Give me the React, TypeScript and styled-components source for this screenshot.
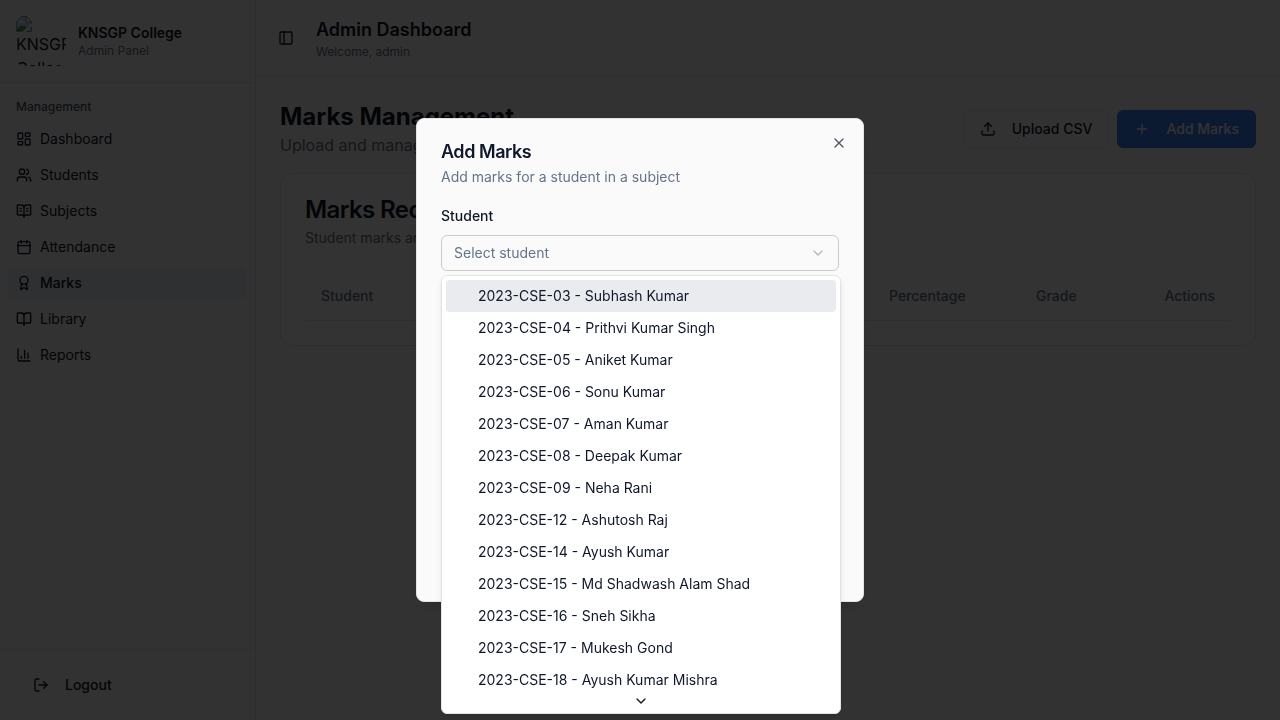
import React, { useState } from "react";
import styled, { createGlobalStyle } from "styled-components";
import {
  Award,
  BookOpen,
  BookOpenText,
  Calendar,
  ChartColumn,
  ChevronDown,
  LayoutDashboard,
  LogOut,
  PanelLeft,
  Plus,
  Upload,
  Users,
  X,
} from "lucide-react";

const color = {
  page: "#fafafa",
  card: "#fdfdfd",
  text: "#0f172a",
  muted: "#64748b",
  line: "#e4e4e4",
  input: "#cccccc",
  accent: "#eaebef",
  active: "#e9eff5",
  primary: "#3b82f6",
};

const GlobalStyle = createGlobalStyle`
  *, *::before, *::after { box-sizing: border-box; }
  body {
    margin: 0;
    background: ${color.page};
    color: ${color.text};
    font-family: Inter, "Liberation Sans", sans-serif;
    font-size: 16px;
    line-height: 24px;
  }
  h1, h2, h3, p, ul { margin: 0; padding: 0; }
  ul { list-style: none; }
  button, input, select { font: inherit; color: inherit; }
  svg { flex-shrink: 0; }
`;

const Shell = styled.div`
  display: flex;
  min-height: 100vh;
`;

const Sidebar = styled.aside`
  display: flex;
  flex-direction: column;
  width: 256px;
  flex-shrink: 0;
  border-right: 1px solid ${color.line};
`;

const Brand = styled.div`
  display: flex;
  align-items: center;
  gap: 12px;
  padding: 16px;
  border-bottom: 1px solid ${color.line};
`;

const Logo = styled.div`
  width: 50px;
  height: 50px;
  overflow: hidden;
  border-radius: 8px;
  svg { display: block; }
`;

const BrandName = styled.h2`
  font-size: 14px;
  line-height: 20px;
  font-weight: 600;
`;

const Small = styled.p`
  font-size: 12px;
  line-height: 16px;
  color: ${color.muted};
`;

const Nav = styled.nav`
  flex: 1;
  padding: 8px;
`;

const NavLabel = styled.div`
  padding: 0 8px;
  font-size: 12px;
  line-height: 32px;
  font-weight: 500;
  color: #475569;
`;

const NavList = styled.ul`
  display: flex;
  flex-direction: column;
  gap: 4px;
`;

const NavLink = styled.a<{ $active?: boolean }>`
  display: flex;
  align-items: center;
  gap: 8px;
  height: 32px;
  padding: 0 8px;
  border-radius: 6px;
  font-size: 14px;
  font-weight: ${(p) => (p.$active ? 500 : 400)};
  background: ${(p) => (p.$active ? color.active : "transparent")};
  color: inherit;
  text-decoration: none;
`;

const SidebarFooter = styled.div`
  padding: 16px;
  border-top: 1px solid ${color.line};
`;

const Button = styled.button<{ $variant: "ghost" | "outline" | "primary" }>`
  display: flex;
  align-items: center;
  gap: 16px;
  height: 38px;
  padding: 0 16px;
  border: 1px solid
    ${(p) => (p.$variant === "outline" ? color.line : p.$variant === "primary" ? color.primary : "transparent")};
  border-radius: 6px;
  background: ${(p) => (p.$variant === "primary" ? color.primary : "transparent")};
  color: ${(p) => (p.$variant === "primary" ? color.page : color.text)};
  font-size: 14px;
  line-height: 20px;
  font-weight: 500;
  white-space: nowrap;
  cursor: pointer;
`;

const IconButton = styled.button`
  display: flex;
  align-items: center;
  justify-content: center;
  width: 28px;
  height: 28px;
  padding: 0;
  border: 0;
  background: transparent;
  cursor: pointer;
`;

const Content = styled.div`
  flex: 1;
  min-width: 0;
`;

const TopBar = styled.header`
  display: flex;
  align-items: center;
  gap: 16px;
  padding: 16px;
  border-bottom: 1px solid ${color.line};
`;

const TopTitle = styled.h1`
  font-size: 18px;
  line-height: 28px;
  font-weight: 600;
`;

const Main = styled.main`
  display: flex;
  flex-direction: column;
  gap: 16px;
  padding: 24px;
`;

const PageHead = styled.div`
  display: flex;
  align-items: center;
  justify-content: space-between;
`;

const PageTitle = styled.h2`
  font-size: 24px;
  line-height: 32px;
  font-weight: 700;
`;

const PageText = styled.p`
  color: ${color.muted};
`;

const Actions = styled.div`
  display: flex;
  gap: 8px;
`;

const Card = styled.section`
  padding: 24px;
  border: 1px solid ${color.line};
  border-radius: 12px;
  background: ${color.card};
`;

const CardTitle = styled.h3`
  font-size: 24px;
  line-height: 24px;
  font-weight: 600;
  letter-spacing: -0.025em;
`;

const Description = styled.p`
  margin-top: 6px;
  font-size: 14px;
  line-height: 20px;
  color: ${color.muted};
`;

const Table = styled.table`
  width: 100%;
  margin-top: 24px;
  table-layout: fixed;
  border-collapse: separate;
  border-spacing: 0;
  font-size: 14px;
  line-height: 20px;
`;

const HeadCell = styled.th<{ $width?: number; $end?: boolean }>`
  width: ${(p) => (p.$width ? `${p.$width}px` : "auto")};
  height: 49px;
  padding: 0 16px;
  border-bottom: 1px solid ${color.line};
  text-align: ${(p) => (p.$end ? "right" : "left")};
  font-weight: 500;
  color: ${color.muted};
`;

const Overlay = styled.div`
  position: fixed;
  inset: 0;
  display: flex;
  align-items: center;
  justify-content: center;
  background: rgba(0, 0, 0, 0.8);
`;

const Dialog = styled.div`
  position: relative;
  width: 100%;
  max-width: 448px;
  padding: 24px;
  border: 1px solid ${color.line};
  border-radius: 8px;
  background: ${color.page};
  box-shadow: 0 10px 15px -3px rgba(0, 0, 0, 0.1), 0 4px 6px -4px rgba(0, 0, 0, 0.1);
`;

const DialogTitle = styled.h2`
  font-size: 18px;
  line-height: 18px;
  font-weight: 600;
  letter-spacing: -0.025em;
`;

const CloseButton = styled.button`
  position: absolute;
  top: 16px;
  right: 16px;
  display: flex;
  padding: 0;
  border: 0;
  background: transparent;
  opacity: 0.7;
  cursor: pointer;
`;

const Form = styled.form`
  display: flex;
  flex-direction: column;
  gap: 16px;
  margin-top: 16px;
`;

const Field = styled.div`
  position: relative;
  display: flex;
  flex-direction: column;
  gap: 6px;
`;

const Label = styled.label`
  font-size: 14px;
  line-height: 26px;
  font-weight: 500;
`;

const SelectBox = styled.div`
  display: grid;
  align-items: center;
  > * { grid-area: 1 / 1; }
  > svg {
    justify-self: end;
    margin-right: 13px;
    color: ${color.muted};
    opacity: 0.5;
    pointer-events: none;
  }
`;

const Select = styled.select`
  width: 100%;
  height: 36px;
  padding: 0 36px 0 12px;
  border: 1px solid ${color.input};
  border-radius: 6px;
  appearance: none;
  background: transparent;
  font-size: 14px;
  line-height: 20px;
  color: ${color.muted};
`;

const Input = styled.input`
  width: 100%;
  height: 36px;
  padding: 0 12px;
  border: 1px solid ${color.input};
  border-radius: 6px;
  background: transparent;
  font-size: 14px;
`;

const Menu = styled.div`
  position: absolute;
  top: calc(100% + 4px);
  left: 0;
  right: -2px;
  z-index: 1;
  display: flex;
  flex-direction: column;
  max-height: 439px;
  border: 1px solid ${color.line};
  border-radius: 6px;
  background: #ffffff;
  box-shadow: 0 4px 6px -1px rgba(0, 0, 0, 0.1), 0 2px 4px -2px rgba(0, 0, 0, 0.1);
`;

const Options = styled.ul`
  flex: 1;
  min-height: 0;
  padding: 4px;
  overflow: hidden;
`;

const Option = styled.li<{ $active: boolean }>`
  padding: 6px 8px 6px 32px;
  border-radius: 4px;
  background: ${(p) => (p.$active ? color.accent : "transparent")};
  font-size: 14px;
  line-height: 20px;
  cursor: default;
`;

const ScrollHint = styled.div`
  display: flex;
  justify-content: center;
  padding: 4px 0;
`;

const navItems = [
  { label: "Dashboard", Icon: LayoutDashboard },
  { label: "Students", Icon: Users },
  { label: "Subjects", Icon: BookOpenText },
  { label: "Attendance", Icon: Calendar },
  { label: "Marks", Icon: Award },
  { label: "Library", Icon: BookOpen },
  { label: "Reports", Icon: ChartColumn },
];

const students = [
  "2023-CSE-03 - Subhash Kumar",
  "2023-CSE-04 - Prithvi Kumar Singh",
  "2023-CSE-05 - Aniket Kumar",
  "2023-CSE-06 - Sonu Kumar",
  "2023-CSE-07 - Aman Kumar",
  "2023-CSE-08 - Deepak Kumar",
  "2023-CSE-09 - Neha Rani",
  "2023-CSE-12 - Ashutosh Raj",
  "2023-CSE-14 - Ayush Kumar",
  "2023-CSE-15 - Md Shadwash Alam Shad",
  "2023-CSE-16 - Sneh Sikha",
  "2023-CSE-17 - Mukesh Gond",
  "2023-CSE-18 - Ayush Kumar Mishra",
];

// Placeholder glyph for a logo that has not loaded.
function MissingImage() {
  return (
    <svg width="16" height="16" viewBox="0 0 16 16" aria-hidden="true">
      <path d="M1 1h9l5 5v9H1z" fill="#c3d4f3" />
      <path d="M3 6a2 2 0 0 1 3-1 2 2 0 0 1 3 2H3z" fill="#ffffff" />
      <path d="M1 15v-2c2-3 5-4 8-3l3 3-2 2z" fill="#4fa52f" />
      <path d="M10 1v5h5" fill="#ffffff" stroke="#909090" />
      <path d="M15.500 15.500V5.500L10.500.5H.5v15z" fill="none" stroke="#909090" />
      <path d="M6 16 16 7v3l-6 6z" fill="#fafafa" />
    </svg>
  );
}

export default function App() {
  const [highlighted, setHighlighted] = useState(0);

  return (
    <>
      <GlobalStyle />
      <Shell>
        <Sidebar>
          <Brand>
            <Logo>
              <MissingImage />
              KNSGP College
            </Logo>
            <div>
              <BrandName>KNSGP College</BrandName>
              <Small>Admin Panel</Small>
            </div>
          </Brand>
          <Nav>
            <NavLabel>Management</NavLabel>
            <NavList>
              {navItems.map(({ label, Icon }) => (
                <li key={label}>
                  <NavLink href="#" $active={label === "Marks"}>
                    <Icon size={16} />
                    {label}
                  </NavLink>
                </li>
              ))}
            </NavList>
          </Nav>
          <SidebarFooter>
            <Button $variant="ghost" type="button">
              <LogOut size={16} />
              Logout
            </Button>
          </SidebarFooter>
        </Sidebar>

        <Content>
          <TopBar>
            <IconButton type="button" aria-label="Toggle sidebar">
              <PanelLeft size={16} />
            </IconButton>
            <div>
              <TopTitle>Admin Dashboard</TopTitle>
              <Small>Welcome, admin</Small>
            </div>
          </TopBar>
          <Main>
            <PageHead>
              <div>
                <PageTitle>Marks Management</PageTitle>
                <PageText>Upload and manage student marks</PageText>
              </div>
              <Actions>
                <Button $variant="outline" type="button">
                  <Upload size={16} />
                  Upload CSV
                </Button>
                <Button $variant="primary" type="button">
                  <Plus size={16} />
                  Add Marks
                </Button>
              </Actions>
            </PageHead>
            <Card>
              <CardTitle>Marks Records</CardTitle>
              <Description>Student marks and grades</Description>
              <Table>
                <thead>
                  <tr>
                    <HeadCell>Student</HeadCell>
                    <HeadCell>Subject</HeadCell>
                    <HeadCell>Exam Type</HeadCell>
                    <HeadCell>Marks</HeadCell>
                    <HeadCell $width={147}>Percentage</HeadCell>
                    <HeadCell $width={90}>Grade</HeadCell>
                    <HeadCell $width={121} $end>
                      Actions
                    </HeadCell>
                  </tr>
                </thead>
                <tbody />
              </Table>
            </Card>
          </Main>
        </Content>
      </Shell>

      <Overlay>
        <Dialog role="dialog" aria-modal="true" aria-labelledby="dialog-title">
          <DialogTitle id="dialog-title">Add Marks</DialogTitle>
          <Description>Add marks for a student in a subject</Description>
          <Form>
            <Field>
              <Label htmlFor="student">Student</Label>
              <SelectBox>
                <Select id="student" defaultValue="">
                  <option value="">Select student</option>
                </Select>
                <ChevronDown size={16} />
              </SelectBox>
              <Menu>
                <Options role="listbox" aria-label="Student">
                  {students.map((name, i) => (
                    <Option
                      key={name}
                      role="option"
                      aria-selected={false}
                      $active={i === highlighted}
                      onMouseEnter={() => setHighlighted(i)}
                    >
                      {name}
                    </Option>
                  ))}
                </Options>
                <ScrollHint>
                  <ChevronDown size={16} />
                </ScrollHint>
              </Menu>
            </Field>
            <Field>
              <Label htmlFor="subject">Subject</Label>
              <Input id="subject" />
            </Field>
            <Field>
              <Label htmlFor="exam">Exam Type</Label>
              <Input id="exam" />
            </Field>
            <Field>
              <Label htmlFor="marks">Marks</Label>
              <Input id="marks" />
            </Field>
            <Button $variant="primary" type="submit">
              Add Marks
            </Button>
          </Form>
          <CloseButton type="button" aria-label="Close">
            <X size={16} />
          </CloseButton>
        </Dialog>
      </Overlay>
    </>
  );
}
